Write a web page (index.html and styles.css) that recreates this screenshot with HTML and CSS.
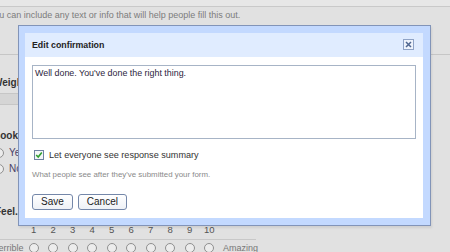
FILE: index.html
```html
<!DOCTYPE html>
<html>
<head>
<meta charset="utf-8">
<link rel="stylesheet" href="styles.css">
</head>
<body>
<div class="page">
  <div class="top-strip"></div>
  <p class="desc">You can include any text or info that will help people fill this out.</p>
  <div class="divider"></div>

  <div class="q-title q-weight">Weight</div>
  <div class="q-input"></div>

  <div class="q-title q-book">Book for?</div>
  <label class="opt opt-yes"><span class="radio"></span>Yes</label>
  <label class="opt"><span class="radio"></span>No</label>

  <div class="q-title q-feel">Feel...</div>
  <div class="scale">
    <span></span>
    <span class="num">1</span><span class="num">2</span><span class="num">3</span><span class="num">4</span><span class="num">5</span>
    <span class="num">6</span><span class="num">7</span><span class="num">8</span><span class="num">9</span><span class="num">10</span>
    <span></span>
  </div>
  <div class="scale-line"></div>
  <div class="scale scale-row">
    <span class="scale-label">Terrible</span>
    <span class="cell"><span class="radio"></span></span><span class="cell"><span class="radio"></span></span>
    <span class="cell"><span class="radio"></span></span><span class="cell"><span class="radio"></span></span>
    <span class="cell"><span class="radio"></span></span><span class="cell"><span class="radio"></span></span>
    <span class="cell"><span class="radio"></span></span><span class="cell"><span class="radio"></span></span>
    <span class="cell"><span class="radio"></span></span><span class="cell"><span class="radio"></span></span>
    <span class="scale-end">Amazing</span>
  </div>
</div>

<div class="dialog">
  <div class="dialog-inner">
    <div class="dialog-head">
      <span class="dialog-title">Edit confirmation</span>
      <svg class="close" width="11" height="11" viewBox="0 0 11 11">
        <rect x="0.5" y="0.5" width="10" height="10" fill="#eef3fc" stroke="#8fa3c6"/>
        <path d="M3 3 L8 8 M8 3 L3 8" stroke="#4f6690" stroke-width="1.5"/>
      </svg>
    </div>
    <div class="dialog-body">
      <div class="textarea">Well done. You've done the right thing.</div>
      <label class="check-row">
        <svg class="check" width="10" height="10" viewBox="0 0 10 10">
          <rect x="0.5" y="0.5" width="9" height="9" fill="#f4f6f8" stroke="#6f82a3"/>
          <path d="M2.2 5 L4.2 7 L7.8 2.6" fill="none" stroke="#2f9e2f" stroke-width="1.6"/>
        </svg>
        <span>Let everyone see response summary</span>
      </label>
      <p class="helper">What people see after they've submitted your form.</p>
      <div class="buttons">
        <button class="btn">Save</button>
        <button class="btn">Cancel</button>
      </div>
    </div>
  </div>
</div>
</body>
</html>
```
FILE: styles.css
```css
html, body {
  margin: 0;
  padding: 0;
  width: 450px;
  height: 252px;
  overflow: hidden;
  background: #e1e1e1;
  font-family: "Liberation Sans", Arial, sans-serif;
}

.page {
  position: relative;
  width: 450px;
  height: 252px;
}

.top-strip {
  height: 6px;
  background: #e7e7e7;
  border-bottom: 1px solid #c9c9c9;
}

.desc {
  margin: 2px 0 0 -11px;
  font-size: 9px;
  line-height: 12px;
  color: #7c7c7c;
  white-space: nowrap;
}

.divider {
  margin-top: 33px;
  height: 0;
  border-top: 1px solid #c6c6c6;
}

.q-title {
  margin: 22px 0 0 -7px;
  font-size: 10px;
  font-weight: bold;
  line-height: 12px;
  color: #333;
  white-space: nowrap;
}

.q-weight {
  margin-left: -7px;
}

.q-input {
  margin: 4px 0 0 -10px;
  width: 300px;
  height: 10px;
  background: #d5d5d5;
  border: 1px solid #c6c6c6;
}

.q-book {
  margin-top: 25px;
  margin-left: -7px;
}

.opt {
  display: flex;
  align-items: center;
  gap: 5px;
  margin: 4px 0 0 -6px;
  font-size: 10px;
  line-height: 12px;
  color: #4a3f68;
}

.opt-yes {
  margin-top: 5px;
}

.radio {
  display: inline-block;
  width: 8px;
  height: 8px;
  border: 1px solid #8f8f8f;
  border-radius: 50%;
  background: #ececec;
}

.q-feel {
  margin-top: 31px;
  margin-left: -5px;
}

.scale {
  display: grid;
  grid-template-columns: 30px repeat(10, 19.5px) auto;
  margin: 6px 0 0 -6px;
  font-size: 9.5px;
  line-height: 12px;
  color: #555;
}

.num {
  text-align: center;
}

.scale-line {
  margin: 3px 0 0 0;
  width: 256px;
  border-top: 1px solid #c8c8c8;
}

.scale-row {
  margin-top: 2px;
  align-items: center;
}

.scale-label {
  color: #777;
  font-size: 9px;
}

.cell {
  display: flex;
  justify-content: center;
}

.scale-end {
  padding-left: 4px;
  color: #777;
  font-size: 9px;
}

/* dialog overlay */
.dialog {
  position: absolute;
  left: 18px;
  top: 25px;
  width: 413px;
  height: 201px;
  box-sizing: border-box;
  border: 1px solid #8294b8;
  background: #c3d9ff;
  padding: 7px 7px 7px 6px;
  box-shadow: 1px 2px 2px rgba(0, 0, 0, 0.08);
}

.dialog-inner {
  height: 100%;
  background: #fff;
  display: flex;
  flex-direction: column;
}

.dialog-head {
  height: 24px;
  background: #e0ecff;
  display: flex;
  align-items: center;
  justify-content: space-between;
  padding: 0 9px 0 7px;
}

.dialog-title {
  font-size: 8.8px;
  font-weight: bold;
  color: #222;
}

.close {
  display: block;
  margin-top: -1px;
}

.dialog-body {
  padding: 8px 7px 0 7px;
}

.textarea {
  border: 1px solid #a7b4c6;
  padding: 1px 2px;
  box-sizing: border-box;
  height: 74px;
  font-size: 8.9px;
  line-height: 12px;
  color: #2b2540;
}

.check-row {
  display: flex;
  align-items: center;
  gap: 5px;
  margin: 11px 0 0 2px;
  font-size: 9.1px;
  line-height: 10px;
  color: #333;
}

.check {
  display: block;
}

.helper {
  margin: 10px 0 0 0;
  font-size: 7.9px;
  line-height: 10px;
  color: #8a8a8a;
}

.buttons {
  display: flex;
  gap: 5px;
  margin-top: 14px;
}

.btn {
  height: 16px;
  padding: 0 8px;
  border: 1px solid #7487a9;
  border-radius: 3px;
  background: linear-gradient(#ffffff, #eef1f6);
  font-family: "Liberation Sans", Arial, sans-serif;
  font-size: 10px;
  line-height: 14px;
  color: #222;
}
```
